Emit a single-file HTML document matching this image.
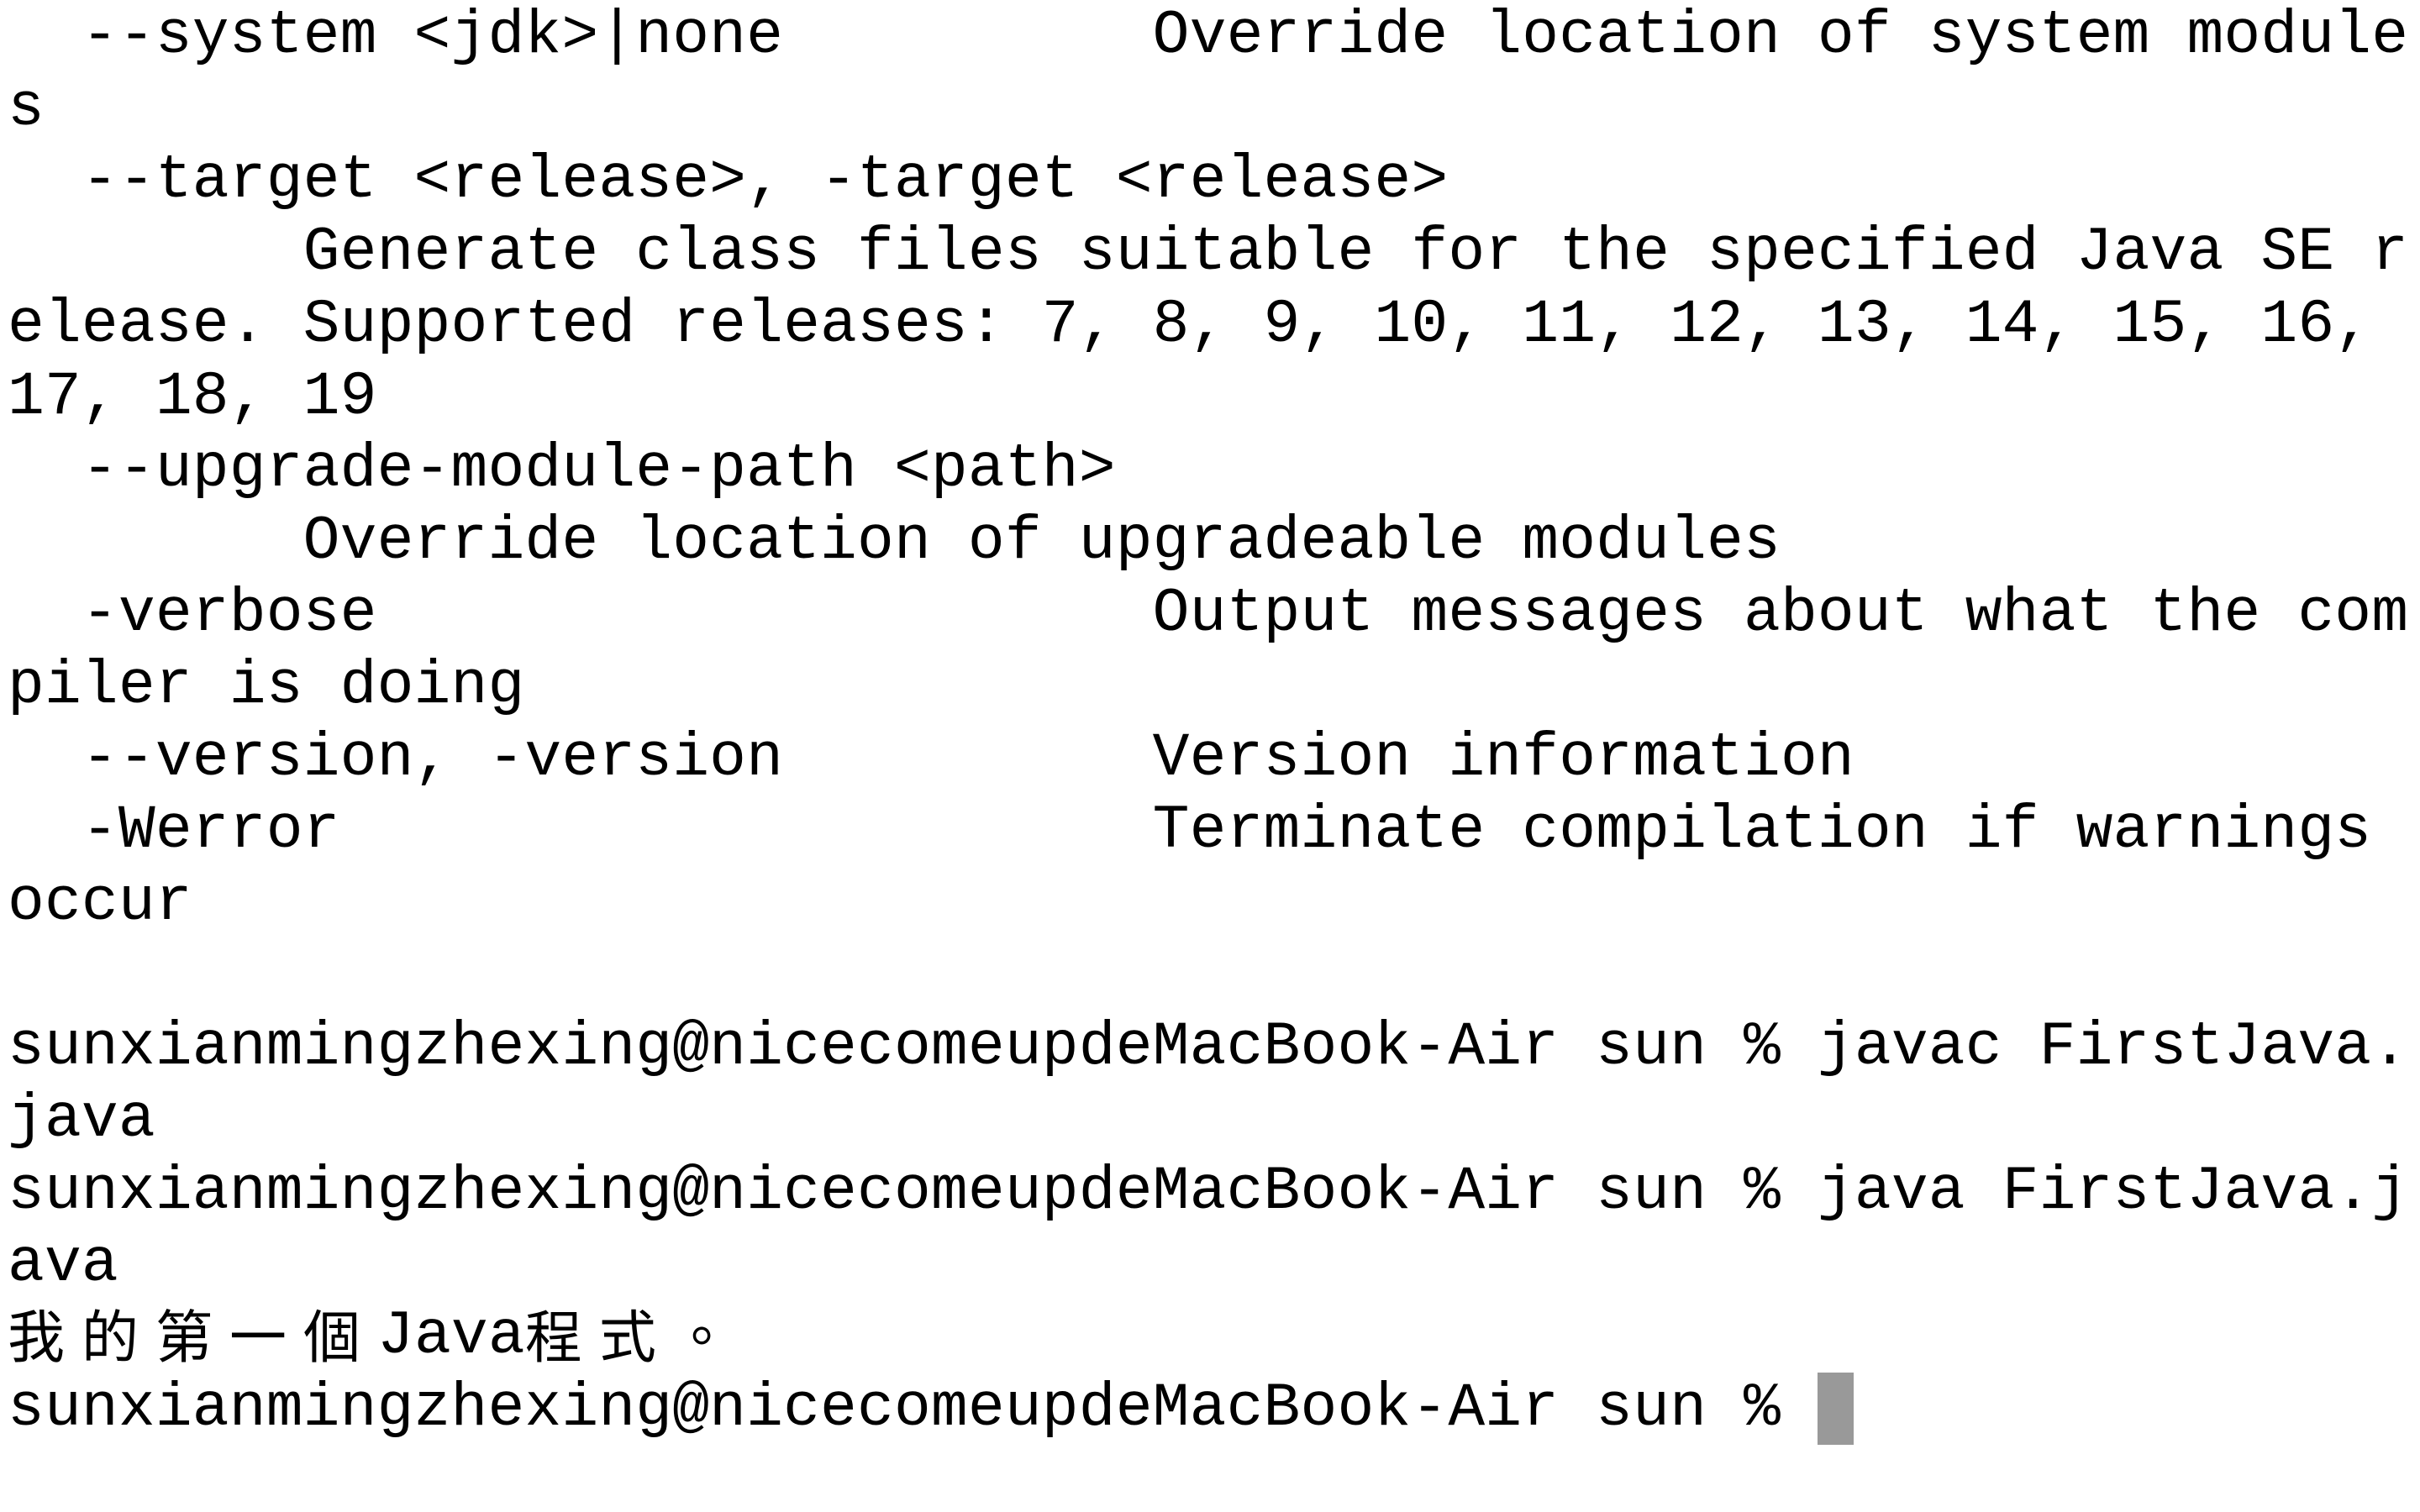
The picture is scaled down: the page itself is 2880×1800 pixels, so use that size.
<!DOCTYPE html>
<html><head><meta charset="utf-8"><style>
html,body{margin:0;padding:0;background:#fff;width:2880px;height:1800px;overflow:hidden}
pre{margin:0;padding:0 0 0 9px;font-family:"Liberation Mono","Noto Sans CJK TC",monospace;font-size:73px;letter-spacing:0.15px;line-height:86px;color:#000;white-space:pre}
.c{display:inline-block;width:88px;font-family:"Noto Sans CJK TC","Liberation Mono",monospace;font-size:68px;line-height:86px;vertical-align:top;position:relative;top:-4px}
.cur{display:inline-block;width:43px;height:86px;background:#999;vertical-align:top}
</style></head><body><pre>  --system &lt;jdk&gt;|none          Override location of system module
s
  --target &lt;release&gt;, -target &lt;release&gt;
        Generate class files suitable for the specified Java SE r
elease. Supported releases: 7, 8, 9, 10, 11, 12, 13, 14, 15, 16,
17, 18, 19
  --upgrade-module-path &lt;path&gt;
        Override location of upgradeable modules
  -verbose                     Output messages about what the com
piler is doing
  --version, -version          Version information
  -Werror                      Terminate compilation if warnings
occur

sunxianmingzhexing@nicecomeupdeMacBook-Air sun % javac FirstJava.
java
sunxianmingzhexing@nicecomeupdeMacBook-Air sun % java FirstJava.j
ava
<span class="c">我</span><span class="c">的</span><span class="c">第</span><span class="c">一</span><span class="c">個</span>Java<span class="c">程</span><span class="c">式</span><span class="c">。</span>
sunxianmingzhexing@nicecomeupdeMacBook-Air sun % <span class="cur"></span></pre></body></html>
